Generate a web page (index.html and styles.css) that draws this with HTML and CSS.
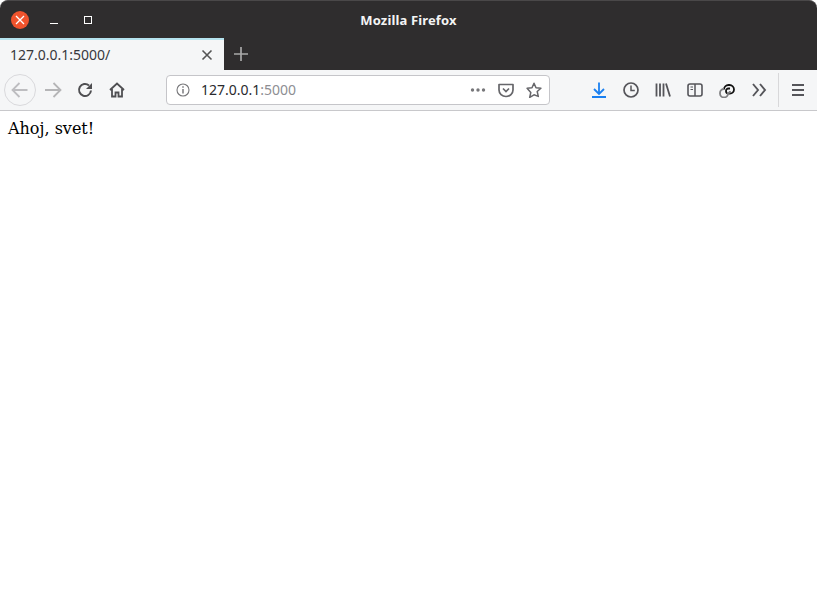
FILE: index.html
```html
<!DOCTYPE html>
<html lang="sk">
<head>
<meta charset="utf-8">
<title>Mozilla Firefox</title>
<link rel="stylesheet" href="styles.css">
</head>
<body>
<div class="window">
  <header class="titlebar">
    <div class="wm-buttons">
      <span class="wm-close"><svg width="18" height="18" viewBox="0 0 18 18"><path d="M5 5l8 8M13 5l-8 8" stroke="#fff" stroke-width="1.3" fill="none"/></svg></span>
      <span class="wm-min"><svg width="8" height="8" viewBox="0 0 8 8"><path d="M0 7.5h8" stroke="#fff" stroke-width="1" fill="none"/></svg></span>
      <span class="wm-max"><svg width="8" height="8" viewBox="0 0 8 8"><rect x=".5" y=".5" width="7" height="7" stroke="#fff" stroke-width="1" fill="none"/></svg></span>
    </div>
    <div class="title">Mozilla Firefox</div>
  </header>
  <div class="tabbar">
    <div class="tab">
      <span class="tab-label">127.0.0.1:5000/</span>
      <svg class="tab-close" width="12" height="12" viewBox="0 0 12 12"><path d="M1.5 1.5l9 9M10.5 1.5l-9 9" stroke="#555" stroke-width="1.6" fill="none"/></svg>
    </div>
    <div class="newtab"><svg width="16" height="16" viewBox="0 0 16 16"><path d="M8 1v14M1 8h14" stroke="#a9a9a9" stroke-width="1.7" fill="none"/></svg></div>
  </div>
  <nav class="toolbar">
    <div class="btn back"><svg width="18" height="16" viewBox="0 0 18 16"><path d="M1.5 8h15M8.5 1L1.5 8l7 7" stroke="#bdbdc0" stroke-width="1.8" fill="none"/></svg></div>
    <div class="btn"><svg width="18" height="16" viewBox="0 0 18 16"><path d="M1 8h15M9.500 1l7 7-7 7" stroke="#b5b5b7" stroke-width="1.8" fill="none"/></svg></div>
    <div class="btn"><svg width="16" height="16" viewBox="0 0 16 16"><path d="M14 8.500A6 6 0 1 1 12 3.500" stroke="#4f4f52" stroke-width="2" fill="none"/><path d="M15 1v6H9z" fill="#4f4f52"/></svg></div>
    <div class="btn"><svg width="16" height="16" viewBox="0 0 16 16"><path d="M1 8l7-6.500L15 8M3 7v7.500h3.500v-4h3v4H13V7" stroke="#4f4f52" stroke-width="1.800" fill="none"/></svg></div>
    <div class="urlbar">
      <svg class="info" width="14" height="14" viewBox="0 0 14 14"><circle cx="7" cy="7" r="6" stroke="#77777a" stroke-width="1.100" fill="none"/><path d="M7 6v4.500M7 3.300v1.500" stroke="#66666a" stroke-width="1.300" fill="none"/></svg>
      <span class="url"><span class="host">127.0.0.1</span><span class="port">:5000</span></span>
      <span class="url-actions">
        <svg width="16" height="16" viewBox="0 0 16 16"><circle cx="2.500" cy="8" r="1.700" fill="#77777a"/><circle cx="8" cy="8" r="1.700" fill="#77777a"/><circle cx="13.500" cy="8" r="1.700" fill="#77777a"/></svg>
        <svg width="16" height="16" viewBox="0 0 16 16"><path d="M1 2.500h14v5.500a7 6.500 0 0 1-14 0z" stroke="#66666a" stroke-width="1.700" fill="none" stroke-linejoin="round"/><path d="M5 6.500l3 3 3-3" stroke="#66666a" stroke-width="1.700" fill="none"/></svg>
        <svg width="16" height="16" viewBox="0 0 16 16"><path d="M8 1.300l2 4.500 4.900.5-3.700 3.200 1.100 4.900L8 12.800l-4.300 2.600 1.100-4.900L1.100 6.300 6 5.800z" stroke="#66666a" stroke-width="1.500" fill="none" stroke-linejoin="round"/></svg>
      </span>
    </div>
    <div class="tools">
      <div class="btn"><svg width="16" height="16" viewBox="0 0 16 16"><path d="M8 .5v11M3 7l5 5 5-5" stroke="#1b80f0" stroke-width="1.800" fill="none"/><path d="M1 15h14" stroke="#1b80f0" stroke-width="2" fill="none"/></svg></div>
      <div class="btn"><svg width="16" height="16" viewBox="0 0 16 16"><circle cx="8" cy="8" r="7" stroke="#55555a" stroke-width="1.700" fill="none"/><path d="M8 3.500V8.500h3.800" stroke="#55555a" stroke-width="1.500" fill="none"/></svg></div>
      <div class="btn"><svg width="16" height="16" viewBox="0 0 16 16"><path d="M1.500 1.500v13M5 1.500v13M8.500 1.500v13M11 1.500l4 13" stroke="#55555a" stroke-width="1.800" fill="none"/></svg></div>
      <div class="btn"><svg width="16" height="16" viewBox="0 0 16 16"><rect x="1" y="2" width="14" height="12" rx="2" stroke="#55555a" stroke-width="1.600" fill="none"/><path d="M8 2v12" stroke="#55555a" stroke-width="1.500"/><path d="M3.500 5H6M3.500 7.500H6" stroke="#55555a" stroke-width="1.200"/></svg></div>
      <div class="btn"><svg width="16" height="16" viewBox="0 0 16 16"><path d="M5 7.500a4.500 4.500 0 0 1 4.500-4.500h1A4.500 4.500 0 0 1 15 7.500a4 4 0 0 1-4 4H9.500A2.500 2.500 0 0 1 7 9a2.500 2.500 0 0 1 2.500-2.500H11" stroke="#111" stroke-width="1.800" fill="none"/><path d="M11 9a2 2 0 0 1-2 2 2.500 2.500 0 0 1 0 .5 4 4 0 0 1-4 4 4 4 0 0 1-4-4V11a4 4 0 0 1 4-4" stroke="#808083" stroke-width="1.800" fill="none"/></svg></div>
      <div class="btn"><svg width="16" height="14" viewBox="0 0 16 14"><path d="M2 1l5 6-5 6M9 1l5 6-5 6" stroke="#55555a" stroke-width="1.900" fill="none"/></svg></div>
      <span class="sep"></span>
      <div class="btn"><svg width="14" height="14" viewBox="0 0 14 14"><path d="M1 2h12M1 7h12M1 12h12" stroke="#55555a" stroke-width="1.800" fill="none"/></svg></div>
    </div>
  </nav>
  <main class="page">
    <p class="hello">Ahoj, svet!</p>
  </main>
</div>
</body>
</html>
```
FILE: styles.css
```css
* { box-sizing: border-box; }
html, body { margin: 0; height: 100%; background: #fff; overflow: hidden; }
.window { width: 817px; height: 603px; display: flex; flex-direction: column; }

.titlebar {
  height: 38px;
  flex: none;
  display: grid;
  grid-template-columns: 1fr auto 1fr;
  align-items: center;
  background: #2f2d2e;
  border-top: 1px solid #4a4849;
  border-radius: 8px 8px 0 0;
}
.wm-buttons { display: flex; align-items: center; padding-left: 11px; }
.wm-close {
  width: 18px; height: 18px; border-radius: 50%;
  background: #f0532d; display: flex;
}
.wm-min { display: flex; margin-left: 21px; }
.wm-max { display: flex; margin-left: 26px; }
.title {
  grid-column: 2;
  color: #f4f4f4;
  font: 700 13px/18px "Noto Sans", "Open Sans", sans-serif;
  letter-spacing: .15px;
}

.tabbar {
  height: 32px;
  flex: none;
  display: flex;
  background: #2f2d2e;
}
.tab {
  width: 224px;
  display: flex;
  align-items: center;
  justify-content: space-between;
  padding: 0 11px 0 10px;
  background: #f5f6f7;
  border-top: 2px solid #b5e3ee;
  color: #38383d;
  font: 14px/18px "Noto Sans", "Open Sans", sans-serif;
}
.tab-label { display: block; }
.newtab { width: 34px; display: flex; align-items: center; justify-content: center; }

.toolbar {
  height: 41px;
  flex: none;
  display: flex;
  align-items: center;
  padding-left: 4px;
  background: #f5f6f7;
  border-bottom: 1px solid #c8c8cb;
}
.btn {
  width: 32px; height: 32px; flex: none;
  display: flex; align-items: center; justify-content: center;
}
.back {
  margin-right: 1px;
  border: 1px solid #d9d9dc;
  border-radius: 50%;
}
.urlbar {
  width: 384px;
  height: 30px;
  margin-left: 33px;
  display: flex;
  align-items: center;
  padding: 0 7px 0 9px;
  background: #fff;
  border: 1px solid #c5c5c9;
  border-radius: 4px;
  font: 14px/18px "Noto Sans", "Open Sans", sans-serif;
}
.info { flex: none; }
.url { margin-left: 11px; }
.host { color: #2a2a2e; }
.port { color: #8e8e93; }
.url-actions { margin-left: auto; display: flex; align-items: center; gap: 12px; }
.tools { margin-left: 33px; display: flex; align-items: center; }
.sep { width: 1px; height: 34px; margin: 0 3px; background: #d8d8da; }

.page { flex: 1; padding: 8px; }
.hello {
  margin: 0;
  color: #000;
  font: 16px/19px "DejaVu Serif", serif;
}
```
